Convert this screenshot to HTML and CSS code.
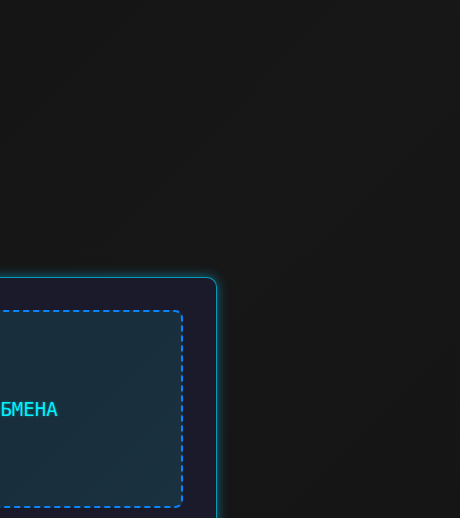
FILE: index.html
```html
<!DOCTYPE html>
<html lang="ru">
<head>
  <meta charset="UTF-8">
  <meta name="viewport" content="width=device-width, initial-scale=1">
  <title>Буфер обмена</title>
  <link rel="stylesheet" href="styles.css">
</head>
<body>
  <div class="stage">
    <div class="panel">
      <div class="drop-zone">
        <span class="drop-label">БУФЕР ОБМЕНА</span>
      </div>
    </div>
  </div>
</body>
</html>
```

FILE: styles.css
```css
html, body {
  margin: 0;
  height: 100%;
  overflow: hidden;
}

body {
  background: linear-gradient(135deg, #151515 0%, #171717 45%, #151515 100%);
  font-family: "DejaVu Sans Mono", "Liberation Mono", monospace;
}

.stage {
  padding-top: 277px;
}

.panel {
  width: 455px;
  margin-left: -238px;
  padding: 32px 33px 32px 32px;
  box-sizing: border-box;
  background: #1b1a2b;
  border: 1px solid rgba(0, 210, 240, 0.7);
  border-radius: 10px;
  box-shadow: 0 0 12px rgba(0, 200, 255, 0.5);
}

.drop-zone {
  display: flex;
  align-items: center;
  justify-content: center;
  height: 198px;
  box-sizing: border-box;
  border: 2px dashed #0a84ff;
  border-radius: 8px;
  background: linear-gradient(135deg, #172a38, #1a3140);
}

.drop-label {
  color: #00f2ff;
  font-size: 19px;
  text-shadow: 0 0 3px rgba(0, 240, 255, 0.35);
}
```
